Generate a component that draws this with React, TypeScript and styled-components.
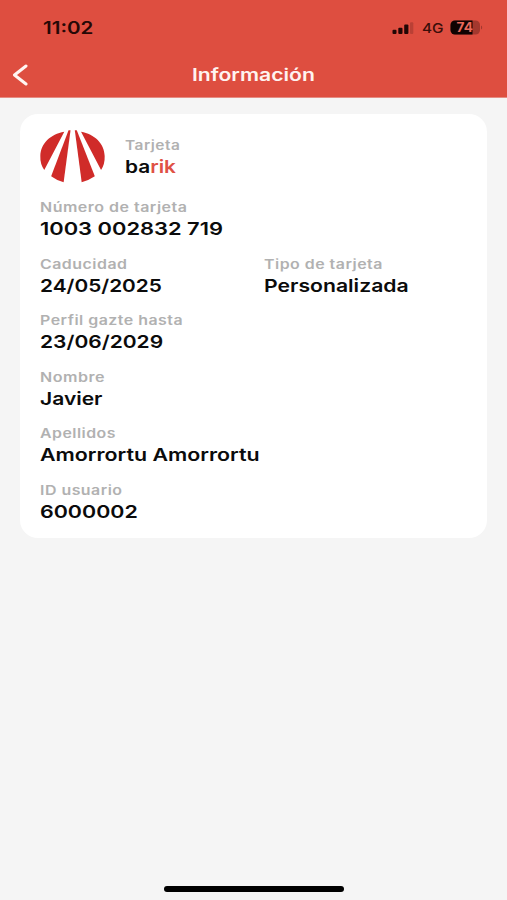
import React from 'react';
import styled, { createGlobalStyle, ThemeProvider } from 'styled-components';

const theme = {
    red: '#DE4E40',
    logoRed: '#D02B29',
    background: '#F5F5F5',
    card: '#FFFFFF',
    label: '#B1B1B1',
    text: '#0B0B0B',
};

const GlobalStyle = createGlobalStyle`
  * {
    box-sizing: border-box;
  }

  body {
    margin: 0;
    background: #F5F5F5;
    font-family: Inter, "Liberation Sans", sans-serif;
  }
`;

// ===============================
// Layout
// ===============================
const Screen = styled.div`
  display: flex;
  flex-direction: column;
  height: 900px;
  background: ${({ theme }) => theme.background};
`;

const Header = styled.header`
  height: 98px;
  background: ${({ theme }) => theme.red};
  border-bottom: 1px solid #E58C83;
`;

const StatusBar = styled.div`
  display: flex;
  align-items: center;
  justify-content: space-between;
  height: 55px;
  padding: 0 24px 0 43px;
`;

const StatusIcons = styled.div`
  display: flex;
  align-items: center;
`;

const NavBar = styled.div`
  display: grid;
  grid-template-columns: 60px 1fr 60px;
  align-items: center;
  height: 39px;
`;

const BackButton = styled.button`
  display: flex;
  padding: 0 0 0 11px;
  border: 0;
  background: none;
`;

const Card = styled.main`
  margin: 16px 20px 0;
  height: 424px;
  padding: 15px 20px 0;
  background: ${({ theme }) => theme.card};
  border-radius: 18px;
`;

const CardHead = styled.div`
  display: flex;
  gap: 20px;
  height: 69.25px;
`;

const FieldRow = styled.div`
  display: grid;
  grid-template-columns: 224px 1fr;
  height: 56.5px;
`;

const HomeIndicator = styled.div`
  width: 180px;
  height: 6px;
  margin: auto auto 8px 164px;
  border-radius: 3px;
  background: #000;
`;

// ===============================
// Text
// ===============================
// Wide lettering: the glyphs are stretched from their left edge
const Wide = styled.span<{ $stretch: number }>`
  display: block;
  width: max-content;
  white-space: pre;
  transform: scaleX(${({ $stretch }) => $stretch});
  transform-origin: 0 50%;
`;

const Time = styled(Wide)`
  color: #260806;
  font-size: 17px;
  font-weight: 600;
`;

const Network = styled(Wide)`
  width: 28.5px;
  margin-left: 7.5px;
  color: #3A0E0A;
  font-size: 13.5px;
  font-weight: 500;
`;

const Title = styled(Wide)`
  justify-self: center;
  transform-origin: 50% 50%;
  color: #FFF3F0;
  font-size: 17px;
  font-weight: 600;
`;

const Label = styled(Wide)`
  color: ${({ theme }) => theme.label};
  font-size: 13px;
  font-weight: 600;
  line-height: 18px;
  letter-spacing: 0.4px;
`;

const Value = styled(Wide)`
  margin-top: 1px;
  color: ${({ theme }) => theme.text};
  font-size: 17.5px;
  font-weight: 600;
  line-height: 24px;
`;

const Brand = styled.div`
  padding-top: 7px;
`;

const Accent = styled.span`
  color: #DF5145;
`;

// ===============================
// Drawings
// ===============================
const SignalIcon = () => (
    <svg width="22" height="14" viewBox="0 0 22 14">
        <g fill="#210705">
            <rect x="0.5" y="8.7" width="4" height="4.3" rx="1" />
            <rect x="6.3" y="6.7" width="4.2" height="6.3" rx="1" />
            <rect x="12.2" y="3.5" width="4.2" height="9.5" rx="1" />
        </g>
        <rect x="18" y="1.3" width="3.3" height="11.7" rx="1" fill="#BA4035" />
    </svg>
);

const BatteryIcon = () => (
    <svg width="33" height="15" viewBox="0 0 33 15">
        <defs>
            <clipPath id="level">
                <rect width="22.5" height="15" />
            </clipPath>
        </defs>
        <rect x="0.5" y="0.5" width="29.5" height="14" rx="4.5" fill="#A3382E" />
        <rect x="0.5" y="0.5" width="29.5" height="14" rx="4.5" fill="#100302" clipPath="url(#level)" />
        <path d="M31 5.5c1.6.5 1.6 3.5 0 4z" fill="#A3382E" />
        <text x="6.5" y="12" fontSize="12.5" fontWeight="700" fill="#E9695B" textLength="16.5" lengthAdjust="spacingAndGlyphs">74</text>
    </svg>
);

const BackIcon = () => (
    <svg width="18" height="22" viewBox="0 0 18 22" fill="none">
        <path d="M15 2 3.5 11 15 20" stroke="#FFF5F2" strokeWidth="3" strokeLinecap="round" strokeLinejoin="round" />
    </svg>
);

const BarikLogo = () => (
    <svg width="65" height="54" viewBox="28 27 198 162" preserveAspectRatio="none" fill={theme.logoRed}>
        <path d="M102 35 41 150Q28 132 29 108C30 70 60 42 102 35Z" />
        <path d="M115 31h6L100 187Q78 181 62 169Z" />
        <path d="M134 31h6l55 138Q177 181 155 187Z" />
        <path d="M153 35l61 115q12-18 11-42C224 70 194 42 153 35Z" />
    </svg>
);

interface FieldProps {
    label: string;
    value: React.ReactNode;
    labelStretch: number;
    valueStretch: number;
}

const Field = ({ label, value, labelStretch, valueStretch }: FieldProps) => (
    <div>
        <Label $stretch={labelStretch}>{label}</Label>
        <Value $stretch={valueStretch}>{value}</Value>
    </div>
);

const rows: FieldProps[][] = [
    [{ label: 'Número de tarjeta', value: '1003 002832 719', labelStretch: 1.23, valueStretch: 1.25 }],
    [
        { label: 'Caducidad', value: '24/05/2025', labelStretch: 1.225, valueStretch: 1.19 },
        { label: 'Tipo de tarjeta', value: 'Personalizada', labelStretch: 1.225, valueStretch: 1.21 },
    ],
    [{ label: 'Perfil gazte hasta', value: '23/06/2029', labelStretch: 1.225, valueStretch: 1.2 }],
    [{ label: 'Nombre', value: 'Javier', labelStretch: 1.235, valueStretch: 1.2 }],
    [{ label: 'Apellidos', value: 'Amorrortu Amorrortu', labelStretch: 1.22, valueStretch: 1.222 }],
    [{ label: 'ID usuario', value: '6000002', labelStretch: 1.225, valueStretch: 1.225 }],
];

const App = () => {
    return (
        <ThemeProvider theme={theme}>
            <GlobalStyle />
            <Screen>
                <Header>
                    <StatusBar>
                        <Time $stretch={1.21}>11:02</Time>
                        <StatusIcons>
                            <SignalIcon />
                            <Network $stretch={1.14}>4G</Network>
                            <BatteryIcon />
                        </StatusIcons>
                    </StatusBar>
                    <NavBar>
                        <BackButton aria-label="Volver">
                            <BackIcon />
                        </BackButton>
                        <Title $stretch={1.245}>Información</Title>
                    </NavBar>
                </Header>
                <Card>
                    <CardHead>
                        <BarikLogo />
                        <Brand>
                            <Field
                                label="Tarjeta"
                                value={<>ba<Accent>rik</Accent></>}
                                labelStretch={1.19}
                                valueStretch={1.19}
                            />
                        </Brand>
                    </CardHead>
                    {rows.map(fields => (
                        <FieldRow key={fields[0].label}>
                            {fields.map(field => (
                                <Field key={field.label} {...field} />
                            ))}
                        </FieldRow>
                    ))}
                </Card>
                <HomeIndicator />
            </Screen>
        </ThemeProvider>
    );
};

export default App;
